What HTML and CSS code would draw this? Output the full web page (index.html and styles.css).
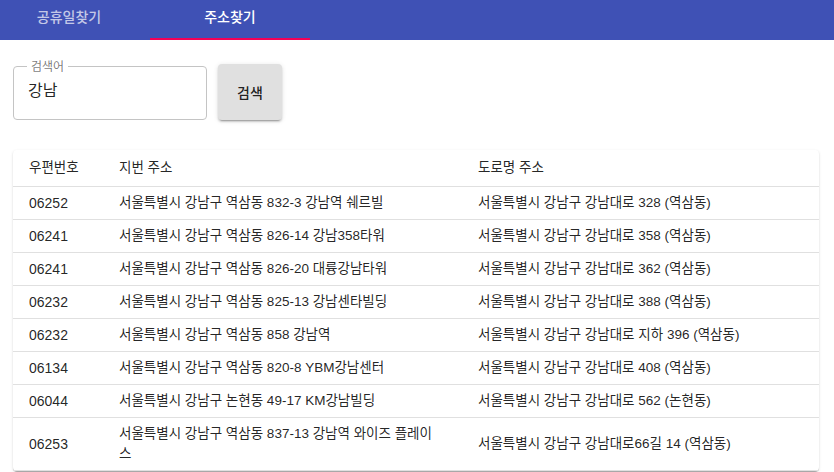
FILE: index.html
```html
<!DOCTYPE html>
<html lang="ko">
<head>
<meta charset="utf-8">
<link rel="stylesheet" href="styles.css">
</head>
<body>
<header class="appbar">
  <nav class="tabs">
    <div class="tab tab-first">공휴일찾기</div>
    <div class="tab tab-active">주소찾기</div>
  </nav>
</header>
<main class="content">
  <form class="search">
    <fieldset class="field">
      <legend class="field-label">검색어</legend>
      <div class="field-value">강남</div>
    </fieldset>
    <button type="button" class="btn">검색</button>
  </form>
  <div class="paper">
    <table class="table">
      <colgroup><col class="c1"><col class="c2"><col class="c3"></colgroup>
      <thead>
        <tr><th>우편번호</th><th>지번 주소</th><th>도로명 주소</th></tr>
      </thead>
      <tbody>
        <tr><td>06252</td><td>서울특별시 강남구 역삼동 832-3 강남역 쉐르빌</td><td>서울특별시 강남구 강남대로 328 (역삼동)</td></tr>
        <tr><td>06241</td><td>서울특별시 강남구 역삼동 826-14 강남358타워</td><td>서울특별시 강남구 강남대로 358 (역삼동)</td></tr>
        <tr><td>06241</td><td>서울특별시 강남구 역삼동 826-20 대륭강남타워</td><td>서울특별시 강남구 강남대로 362 (역삼동)</td></tr>
        <tr><td>06232</td><td>서울특별시 강남구 역삼동 825-13 강남센타빌딩</td><td>서울특별시 강남구 강남대로 388 (역삼동)</td></tr>
        <tr><td>06232</td><td>서울특별시 강남구 역삼동 858 강남역</td><td>서울특별시 강남구 강남대로 지하 396 (역삼동)</td></tr>
        <tr><td>06134</td><td>서울특별시 강남구 역삼동 820-8 YBM강남센터</td><td>서울특별시 강남구 강남대로 408 (역삼동)</td></tr>
        <tr><td>06044</td><td>서울특별시 강남구 논현동 49-17 KM강남빌딩</td><td>서울특별시 강남구 강남대로 562 (논현동)</td></tr>
        <tr><td>06253</td><td>서울특별시 강남구 역삼동 837-13 강남역 와이즈 플레이스</td><td>서울특별시 강남구 강남대로66길 14 (역삼동)</td></tr>
      </tbody>
    </table>
  </div>
</main>
</body>
</html>
```

FILE: styles.css
```css
* { box-sizing: border-box; }
html, body { margin: 0; padding: 0; background: #fff; }
body {
  font-family: "Liberation Sans", "Noto Sans CJK KR", sans-serif;
  color: rgba(0,0,0,0.87);
  width: 834px;
  height: 472px;
  overflow: hidden;
}
.appbar {
  height: 40px;
  background: #3f51b5;
}
.tabs {
  display: flex;
  height: 40px;
}
.tab {
  height: 40px;
  padding-top: 6px;
  font-family: "Noto Sans CJK KR", sans-serif;
  font-size: 14px;
  font-weight: 500;
  line-height: 20px;
  color: #fff;
  text-align: center;
}
.tab-first {
  width: 150px;
  padding-right: 12px;
  color: rgba(255,255,255,0.7);
}
.tab-active {
  width: 160px;
  border-bottom: 2px solid #f50057;
}
.content {
  padding: 24px 15px 0 13px;
}
.search {
  display: flex;
  align-items: flex-start;
  gap: 11px;
  margin: 0;
}
.field {
  width: 194px;
  height: 61px;
  margin: 0;
  margin-top: -5px;
  padding: 0 14px;
  border: 1px solid #c4c4c4;
  border-radius: 4px;
}
.field-label {
  padding: 0 4px;
  margin-left: -1px;
  font-family: "Noto Sans CJK KR", sans-serif;
  font-size: 12px;
  line-height: 14px;
  color: rgba(0,0,0,0.54);
}
.field-value {
  padding-top: 6px;
  font-family: "Noto Sans CJK KR", sans-serif;
  font-size: 16px;
  line-height: 20px;
  color: rgba(0,0,0,0.87);
}
.btn {
  width: 64px;
  height: 56px;
  border: none;
  border-radius: 4px;
  background: #e0e0e0;
  box-shadow: 0 3px 1px -2px rgba(0,0,0,0.2), 0 2px 2px 0 rgba(0,0,0,0.14), 0 1px 5px 0 rgba(0,0,0,0.12);
  font-family: "Noto Sans CJK KR", sans-serif;
  font-size: 14px;
  font-weight: 500;
  color: rgba(0,0,0,0.87);
  padding: 0;
}
.paper {
  margin-top: 30px;
  width: 806px;
  background: #fff;
  border-radius: 4px;
  box-shadow: 0 2px 1px -1px rgba(0,0,0,0.2), 0 1px 1px 0 rgba(0,0,0,0.14), 0 1px 3px 0 rgba(0,0,0,0.12);
}
.table {
  width: 100%;
  table-layout: fixed;
  border-collapse: collapse;
  font-size: 13.5px;
  line-height: 20px;
}
.table th {
  text-align: left;
  font-weight: 400;
  padding: 8px 16px;
  border-bottom: 1px solid #e0e0e0;
}
.table td {
  padding: 6px 16px;
  border-bottom: 1px solid #e0e0e0;
  vertical-align: middle;
}
.table td:first-child { font-size: 14px; }
.table td:nth-child(2) { padding-right: 26px; }
.c1 { width: 90px; }
.c2 { width: 359px; }
```
